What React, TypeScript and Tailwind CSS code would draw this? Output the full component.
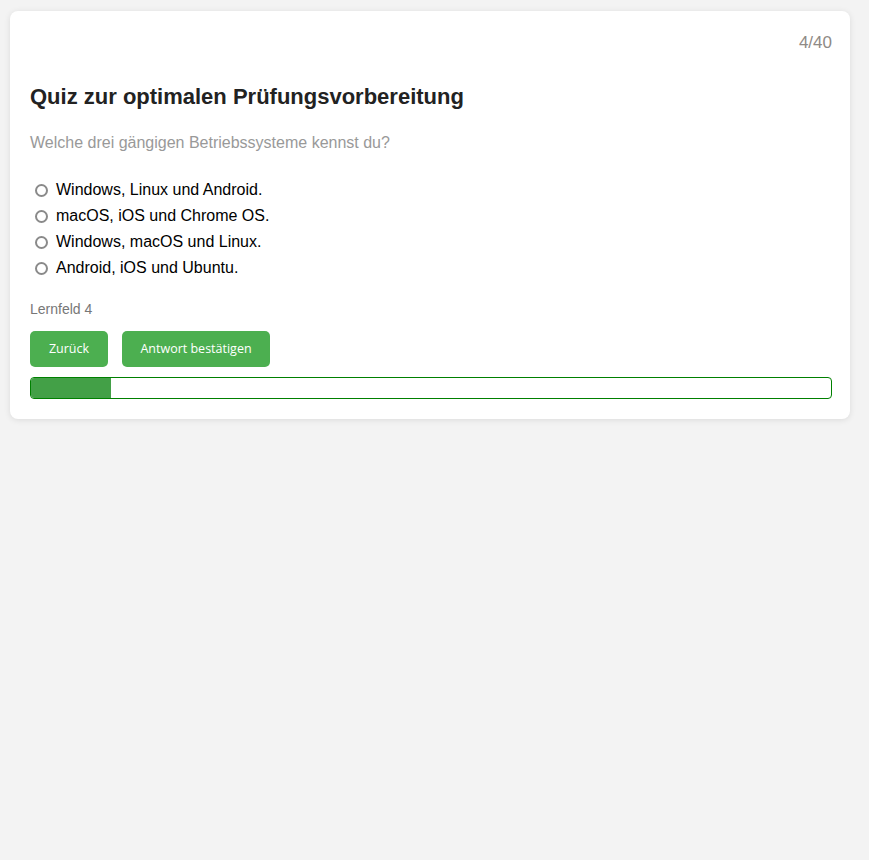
import React from 'react';

const options = [
  'Windows, Linux und Android.',
  'macOS, iOS und Chrome OS.',
  'Windows, macOS und Linux.',
  'Android, iOS und Ubuntu.',
];

export default function App() {
  const current = 4;
  const total = 40;

  return (
    <div className="min-h-[860px] bg-[#f3f3f3] pb-[10px] pl-[10px] pr-[19px] pt-[11px] font-['Liberation_Sans',Arial,sans-serif]">
      <div className="rounded-lg bg-white pb-5 pl-5 pr-[18px] pt-[22px] shadow-[0_1px_6px_rgba(0,0,0,0.1)]">
        {/* Counter */}
        <div className="flex justify-end text-[17px] leading-5 text-[#8f8a86]">
          {current}/{total}
        </div>

        {/* Title */}
        <h1 className="mt-[30px] text-[22px] font-bold leading-7 text-[#222]">
          Quiz zur optimalen Prüfungsvorbereitung
        </h1>

        {/* Question */}
        <p className="mt-[22px] text-[16px] leading-5 text-[#999]">
          Welche drei gängigen Betriebssysteme kennst du?
        </p>

        {/* Options */}
        <div className="mt-[27px] flex flex-col gap-[6px]">
          {options.map((opt) => (
            <label key={opt} className="flex h-5 items-center text-[16px] text-black">
              <span className="ml-[5px] mr-[8px] inline-block size-[13px] rounded-full border-2 border-[#8a8a8a] bg-white" />
              {opt}
            </label>
          ))}
        </div>

        {/* Lernfeld */}
        <div className="mt-[21px] text-[14px] leading-5 text-[#777]">Lernfeld 4</div>

        {/* Buttons */}
        <div className="mt-[12px] flex gap-[14px]">
          <button className="h-9 w-[78px] rounded-[5px] bg-[#4caf50] font-['Open_Sans',sans-serif] text-[12.5px] text-white">
            Zurück
          </button>
          <button className="h-9 w-[148px] rounded-[5px] bg-[#4caf50] font-['Open_Sans',sans-serif] text-[12.5px] text-white">
            Antwort bestätigen
          </button>
        </div>

        {/* Progress */}
        <div className="mt-[10px] h-[22px] overflow-hidden rounded-[4px] border border-[#008000] bg-white">
          <div className="h-full bg-[#43a047]" style={{ width: `${(current / total) * 100}%` }} />
        </div>
      </div>
    </div>
  );
}
